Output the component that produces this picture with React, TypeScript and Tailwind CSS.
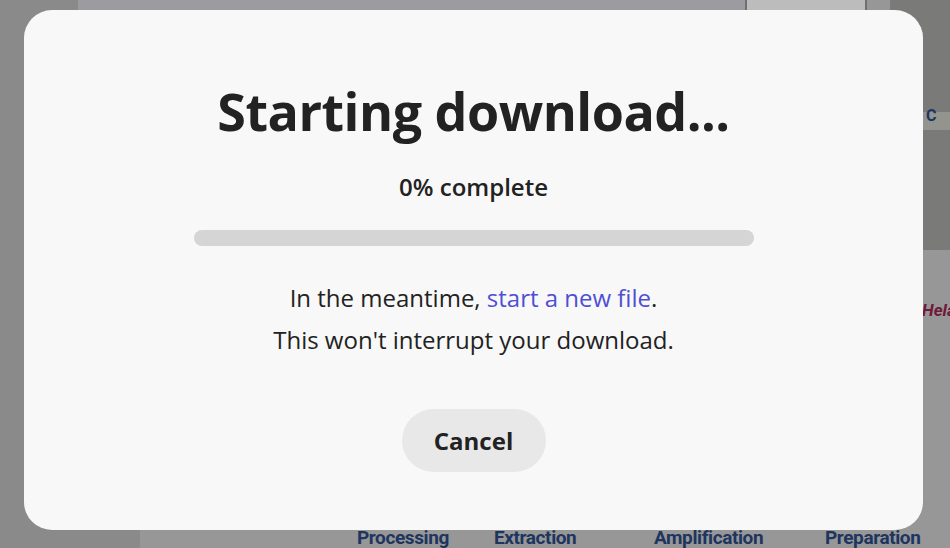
import React from "react";

export default function App() {
  const sans = { fontFamily: '"Open Sans", "Noto Sans", sans-serif' };
  const label = { fontFamily: '"Roboto", sans-serif' };
  return (
    <div className="relative flex h-[548px] w-[950px] flex-col overflow-hidden bg-[#979797]" style={sans}>
      {/* dimmed background slide pieces */}
      <div className="absolute left-0 top-0 h-full w-[140px] bg-[#8a8a8a]" />
      <div className="absolute left-[78px] top-0 h-[20px] w-[700px] bg-[#9b9ba0]" />
      <div className="absolute left-[745px] top-0 h-[12px] w-[122px] border-x-2 border-[#6f6f6f] bg-[#bcbcbc]" />
      <div className="absolute right-0 top-0 h-[250px] w-[60px] bg-[#7a7a78]" />
      <div className="absolute right-0 top-[112px] h-[18px] w-[60px] bg-[#94948f]" />
      <div className="absolute left-[926px] top-[104px] text-[16px] font-bold text-[#1e3560]" style={label}>
        C
      </div>
      <div className="absolute left-[922px] top-[298px] text-[17px] font-bold italic text-[#6e1a38]" style={label}>
        Hela
      </div>

      {/* modal */}
      <div className="relative z-10 ml-[24px] mt-[10px] flex h-[520px] w-[899px] shrink-0 flex-col items-center rounded-[28px] bg-[#f8f8f8] text-[#222222]">
        <h1 className="mt-[71px] text-[52px] font-bold leading-[60px] tracking-[-0.5px]">Starting download...</h1>
        <div className="mt-[31px] text-[24px] font-semibold leading-[30px]">0% complete</div>
        <div className="mt-[28px] h-[16px] w-[560px] rounded-full bg-[#d5d5d5]" />
        <div className="mt-[31px] text-center text-[24px] leading-[42px]">
          <div>
            In the meantime, <span className="text-[#4f4fd4]">start a new file</span>.
          </div>
          <div>This won't interrupt your download.</div>
        </div>
        <button className="mt-[48px] flex h-[63px] w-[144px] items-center justify-center rounded-full bg-[#e8e8e8] text-[24px] font-bold text-[#222222]">
          Cancel
        </button>
      </div>

      {/* slide labels peeking under the modal */}
      <div
        className="relative z-20 mt-[-2px] flex pl-[357px] text-[19px] font-bold leading-[20px] tracking-[-0.4px] text-[#1d355f]"
        style={label}
      >
        <span className="w-[137px]">Processing</span>
        <span className="w-[160px]">Extraction</span>
        <span className="w-[171px]">Amplification</span>
        <span>Preparation</span>
      </div>
    </div>
  );
}
